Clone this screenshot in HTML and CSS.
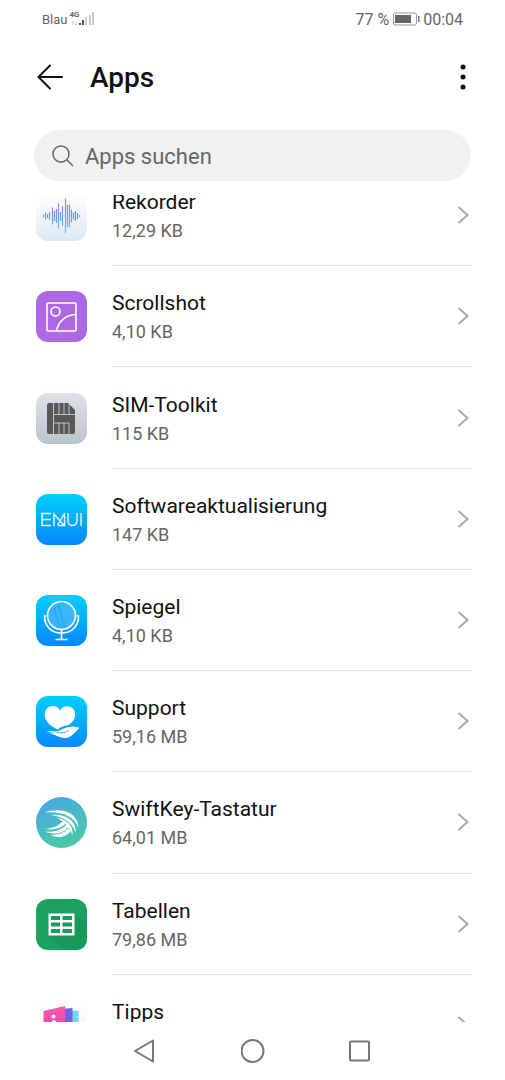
FILE: index.html
```html
<!DOCTYPE html>
<html lang="de">
<head>
<meta charset="utf-8">
<meta name="viewport" content="width=device-width, initial-scale=1">
<title>Apps</title>
<link rel="stylesheet" href="styles.css">
</head>
<body>
<div class="status">
  <div class="status-side">
    <span class="carrier">Blau</span>
    <span class="signal">
      <span class="network">4G</span>
      <svg class="bars" width="24" height="16" viewBox="0 0 24 16" aria-hidden="true">
        <path d="M2 14v-3.500M1 11.500l1-1 1 1M5 10.500V14M4 13l1 1 1-1" fill="none" stroke="#ccc"/>
        <path d="M8 12h2v2H8zM11 9h2v5h-2z" fill="#555"/>
        <path d="M14 6h2v8h-2zM18 4h2v10h-2zM21 1h2v13h-2z" fill="#ccc"/>
      </svg>
    </span>
  </div>
  <div class="status-side clock">
    <span>77 %</span>
    <svg width="28" height="14" viewBox="0 0 28 14" aria-hidden="true">
      <rect x="1.500" y="1" width="23" height="12" rx="2" fill="#fff" stroke="#999"/>
      <rect x="3" y="3" width="16" height="8" fill="#666"/>
      <path d="M26 4h1.500v6H26z" fill="#777"/>
    </svg>
    <span>00:04</span>
  </div>
</div>
<header class="header">
  <button class="icon-button" aria-label="Zurück">
    <svg width="28" height="28" viewBox="0 0 28 28"><path d="M26 13H2.500M14 1.500L2.500 13 14 24.500" fill="none" stroke="#111" stroke-width="2" stroke-linecap="round" stroke-linejoin="round"/></svg>
  </button>
  <h1 class="title">Apps</h1>
  <button class="icon-button" aria-label="Weitere Optionen">
    <svg width="16" height="28" viewBox="0 0 16 28"><g fill="#111"><circle cx="8" cy="3" r="2.500"/><circle cx="8" cy="13" r="2.500"/><circle cx="8" cy="23" r="2.500"/></g></svg>
  </button>
</header>
<label class="search">
  <svg width="22" height="22" viewBox="0 0 22 22" aria-hidden="true"><g fill="none" stroke="#666" stroke-width="1.500" stroke-linecap="round"><circle cx="9" cy="9" r="8"/><path d="M15 15l5.500 5.500"/></g></svg>
  <input class="search-input" type="text" placeholder="Apps suchen" aria-label="Apps suchen">
</label>
<main class="scroller">
  <ul class="list">
    <li class="row">
      <svg class="app-icon" viewBox="0 0 51 51" aria-hidden="true">
        <defs>
          <linearGradient id="rec-bg" x2="0" y2="1"><stop stop-color="#fff"/><stop offset=".2" stop-color="#fbfcfd"/><stop offset="1" stop-color="#dce9f3"/></linearGradient>
          <linearGradient id="rec-wave" gradientUnits="userSpaceOnUse" x1="0" y1="8" x2="0" y2="44"><stop stop-color="#b779d9"/><stop offset=".5" stop-color="#6a9be6"/><stop offset="1" stop-color="#7cc4f3"/></linearGradient>
        </defs>
        <rect width="51" height="51" rx="12" fill="url(#rec-bg)"/>
        <path d="M7.500 25v2M9.500 22.500v7M11.500 24v4M13.500 22v8M16.500 17.500v17M18.500 21v10M20.500 19v14M22.500 13.500v25M24.500 22v9M26.500 16v20M29.500 8.500v35M31.500 15v22M33.500 14.500v23M35.500 19.500v13M37.500 22.500v7M39.500 21v10M41.500 23v6M43.500 25v2" fill="none" stroke="url(#rec-wave)" stroke-width="1.200"/>
      </svg>
      <a class="row-body" href="#rekorder"><span class="row-text"><span class="name">Rekorder</span><span class="size">12,29 KB</span></span><svg class="chevron" viewBox="0 0 12 20" aria-hidden="true"><path d="M1.500 2l9 8-9 8"/></svg></a>
    </li>
    <li class="row">
      <svg class="app-icon" viewBox="0 0 51 51" aria-hidden="true">
        <rect width="51" height="51" rx="12" fill="#ad68e3"/>
        <g fill="none" stroke="#fff" stroke-width="1.600"><rect x="11" y="12" width="29" height="28" rx="1"/><circle cx="19.500" cy="20.500" r="4.500"/><path d="M20.500 40C22 31 29 24 40 23.500"/></g>
      </svg>
      <a class="row-body" href="#scrollshot"><span class="row-text"><span class="name">Scrollshot</span><span class="size">4,10 KB</span></span><svg class="chevron" viewBox="0 0 12 20" aria-hidden="true"><path d="M1.500 2l9 8-9 8"/></svg></a>
    </li>
    <li class="row">
      <svg class="app-icon" viewBox="0 0 51 51" aria-hidden="true">
        <defs><linearGradient id="sim-bg" x2="0" y2="1"><stop stop-color="#dce2e8"/><stop offset="1" stop-color="#bcc4cb"/></linearGradient></defs>
        <rect width="51" height="51" rx="12" fill="url(#sim-bg)"/>
        <path d="M13 10h19l7 7v22q0 2-2 2H13q-2 0-2-2V12q0-2 2-2z" fill="#585858"/>
        <path d="M17.500 10v31M17.500 21.500H39M23 10v11.500M28 10v11.500M33 11v10.500M17.500 30h15.500V41M23 30V41M28 30V41" fill="none" stroke="#c9d0d6" stroke-width=".9"/>
      </svg>
      <a class="row-body" href="#sim"><span class="row-text"><span class="name">SIM-Toolkit</span><span class="size">115 KB</span></span><svg class="chevron" viewBox="0 0 12 20" aria-hidden="true"><path d="M1.500 2l9 8-9 8"/></svg></a>
    </li>
    <li class="row">
      <svg class="app-icon" viewBox="0 0 51 51" aria-hidden="true">
        <defs><linearGradient id="blue" x2="0" y2="1"><stop stop-color="#02d0fc"/><stop offset="1" stop-color="#0787fb"/></linearGradient></defs>
        <rect width="51" height="51" rx="12" fill="url(#blue)"/>
        <path d="M15 19.500H6v12h9M6 25.500h9M18 32V20l10 11.500h-6M28.500 19.500L21.500 31M28.500 19v13M32 19v8a4.500 4.500 0 0 0 9 0V19M45 19v13" fill="none" stroke="#e9fbff" stroke-width="1.400"/>
      </svg>
      <a class="row-body" href="#update"><span class="row-text"><span class="name">Softwareaktualisierung</span><span class="size">147 KB</span></span><svg class="chevron" viewBox="0 0 12 20" aria-hidden="true"><path d="M1.500 2l9 8-9 8"/></svg></a>
    </li>
    <li class="row">
      <svg class="app-icon" viewBox="0 0 51 51" aria-hidden="true">
        <rect width="51" height="51" rx="12" fill="url(#blue)"/>
        <circle cx="25.500" cy="20.500" r="14" fill="#3ab6f9" stroke="#fff" stroke-width="1.600"/>
        <path d="M22 10l7 22M18 13l6 19" stroke="#2aaaf5" stroke-width="2"/>
        <path d="M10.500 21H8.500C8.500 31 15 38 25.500 38S42.500 31 42.500 21H40.500M25.500 38v6.500M19.500 44.500h12M25.500 34.500v3" fill="none" stroke="#fff" stroke-width="1.600"/>
      </svg>
      <a class="row-body" href="#spiegel"><span class="row-text"><span class="name">Spiegel</span><span class="size">4,10 KB</span></span><svg class="chevron" viewBox="0 0 12 20" aria-hidden="true"><path d="M1.500 2l9 8-9 8"/></svg></a>
    </li>
    <li class="row">
      <svg class="app-icon" viewBox="0 0 51 51" aria-hidden="true">
        <rect width="51" height="51" rx="12" fill="url(#blue)"/>
        <path d="M24 14.500C21.500 8 8.700 8 8.700 19c0 6.500 6 11 13 14.500 2-2.500 6-3.500 11-4.500 4-3 6.500-6.500 6.500-10.500 0-9.500-12-11-15.200-4z" fill="#fff"/>
        <path d="M10.500 35.500c5-1.500 9 .5 12-.5 4-2 9-4.500 13-4.500 3 0 6 .5 8 1.500-3 2-7 9.500-14 10-7 .3-9-4-17-4.500l6-.5z" fill="#fff"/>
        <path d="M20.500 36.500c5 .8 10 .5 12-2.500" fill="none" stroke="#159df9" stroke-width=".9"/>
      </svg>
      <a class="row-body" href="#support"><span class="row-text"><span class="name">Support</span><span class="size">59,16 MB</span></span><svg class="chevron" viewBox="0 0 12 20" aria-hidden="true"><path d="M1.500 2l9 8-9 8"/></svg></a>
    </li>
    <li class="row">
      <svg class="app-icon" viewBox="0 0 51 51" aria-hidden="true">
        <defs><linearGradient id="swift" x1=".3" x2=".7" y2="1"><stop stop-color="#48a9e5"/><stop offset="1" stop-color="#4bcb9f"/></linearGradient></defs>
        <circle cx="25.500" cy="25.500" r="25.500" fill="url(#swift)"/>
        <g fill="#fff">
          <path d="M8.500 15.500c14-5 33-2.500 34 15.500C38 18 24 14 8.500 15.500z"/>
          <path d="M14.500 18c14-2 26 5 25.500 18C36 25 27 19.500 14.500 18z"/>
          <path d="M21 21c10 1.500 17 8 15.500 17C33 30 29 25 21 21z"/>
          <path d="M8.500 32c8-.5 14-3 19-8.500 2 .5 3 2 2.500 3-5 5-12 7-21.500 5.500z"/>
          <path d="M8.500 34.500c9 1 16-1 22.500-7 2 1 2 2 1.500 3-6 6-14 8-24 4z"/>
          <path d="M14.500 38c8 0 13-2 18-6.500 2 1 2 3 1 4-5 5-12 6-19 2.500z"/>
        </g>
      </svg>
      <a class="row-body" href="#swiftkey"><span class="row-text"><span class="name">SwiftKey-Tastatur</span><span class="size">64,01 MB</span></span><svg class="chevron" viewBox="0 0 12 20" aria-hidden="true"><path d="M1.500 2l9 8-9 8"/></svg></a>
    </li>
    <li class="row">
      <svg class="app-icon" viewBox="0 0 51 51" aria-hidden="true">
        <rect width="51" height="51" rx="12" fill="#1ba261"/>
        <path d="M39 15l12 9v15q0 12-12 12H28L13 37z" fill="#18995c"/>
        <path d="M12.500 14.500h26v22h-26z" fill="#fff"/>
        <path d="M15 17h9v4h-9zM26.500 17H36v4h-9.500zM15 23.500h9v4h-9zM26.500 23.500H36v4h-9.500zM15 30h9v4h-9zM26.500 30H36v4h-9.500z" fill="#1b9c5c"/>
      </svg>
      <a class="row-body" href="#tabellen"><span class="row-text"><span class="name">Tabellen</span><span class="size">79,86 MB</span></span><svg class="chevron" viewBox="0 0 12 20" aria-hidden="true"><path d="M1.500 2l9 8-9 8"/></svg></a>
    </li>
    <li class="row">
      <svg class="app-icon" viewBox="0 0 51 51" aria-hidden="true">
        <defs>
          <linearGradient id="tip-bg" x2="0" y2="1"><stop stop-color="#fff"/><stop offset="1" stop-color="#e9eef4"/></linearGradient>
          <linearGradient id="tip-pink" x2="0" y2="1"><stop stop-color="#f45ba8"/><stop offset="1" stop-color="#ea3cb5"/></linearGradient>
        </defs>
        <rect width="51" height="51" rx="12" fill="url(#tip-bg)"/>
        <path d="M29 10l13.500 1v22H29z" fill="#70d5fa"/>
        <path d="M24 9l12.500-1v26H24z" fill="#7461df"/>
        <path d="M7.500 11L29 6v33L7.500 36z" fill="url(#tip-pink)"/>
        <circle cx="17.500" cy="16.500" r="2" fill="#fff"/><path d="M16 20.500h4v9h-4z" fill="#fff"/>
      </svg>
      <a class="row-body" href="#tipps"><span class="row-text"><span class="name">Tipps</span></span><svg class="chevron" viewBox="0 0 12 20" aria-hidden="true"><path d="M1.500 2l9 8-9 8"/></svg></a>
    </li>
  </ul>
</main>
<nav class="nav">
  <button class="icon-button" aria-label="Zurück"><svg width="24" height="26" viewBox="0 0 24 26"><path d="M20 2.500L2 13l18 10.500z"/></svg></button>
  <button class="icon-button" aria-label="Startbildschirm"><svg width="24" height="26" viewBox="0 0 24 26"><circle cx="11.500" cy="13" r="11"/></svg></button>
  <button class="icon-button" aria-label="Letzte Apps"><svg width="24" height="26" viewBox="0 0 24 26"><rect x="1" y="3.500" width="19" height="19" rx="1"/></svg></button>
</nav>
</body>
</html>
```
FILE: styles.css
```css
* {
  box-sizing: border-box;
}

body {
  margin: 0;
  height: 100vh;
  display: flex;
  flex-direction: column;
  background: #fff;
  color: #111;
  font-family: Roboto, "Liberation Sans", sans-serif;
}

.status {
  display: flex;
  justify-content: space-between;
  align-items: center;
  height: 38px;
  padding: 0 42px;
  color: #666;
}

.status-side {
  display: flex;
  align-items: center;
  gap: 3px;
}

.carrier {
  font-size: 13px;
}

.clock {
  font-size: 16px;
}

.signal {
  position: relative;
  display: flex;
}

.network {
  position: absolute;
  top: 0;
  left: -1px;
  font-size: 8px;
  line-height: 8px;
  font-weight: 700;
}

.header {
  display: flex;
  align-items: center;
  height: 80px;
  padding: 0 34px 0 36px;
}

.icon-button {
  display: flex;
  padding: 0;
  border: 0;
  background: none;
}

.title {
  flex: 1;
  margin: 0 0 0 26px;
  font-size: 28px;
  font-weight: 500;
  line-height: 32px;
}

.search {
  display: flex;
  align-items: center;
  gap: 11px;
  height: 51px;
  margin: 12px 34px 14px;
  padding: 1px 17px 0 18px;
  border-radius: 26px;
  background: #f1f1f1;
}

.search-input {
  flex: 1;
  min-width: 0;
  padding: 0;
  border: 0;
  outline: 0;
  background: none;
  color: #111;
  font: inherit;
  font-size: 22px;
}

.search-input::placeholder {
  color: #666;
  opacity: 1;
}

.scroller {
  flex: 1;
  min-height: 0;
  overflow: hidden;
}

/* The list is scrolled part of the way through its first row. */
.list {
  display: grid;
  grid-auto-rows: 1fr;
  height: calc(100% + 84px);
  margin: -30px 0 0;
  padding: 0;
  list-style: none;
}

.row {
  display: flex;
  align-items: center;
  gap: 25px;
  padding: 0 34px 0 36px;
}

.app-icon {
  flex: none;
  width: 51px;
  height: 51px;
}

.row-body {
  flex: 1;
  align-self: stretch;
  display: flex;
  align-items: center;
  justify-content: space-between;
  border-bottom: 1px solid #e2e2e2;
  color: inherit;
  text-decoration: none;
}

.row-text {
  display: flex;
  flex-direction: column;
  height: 56px;
}

.name {
  font-size: 21px;
  line-height: 30px;
}

.size {
  color: #666;
  font-size: 18px;
  line-height: 28px;
}

.chevron {
  width: 12px;
  height: 20px;
  margin-right: 2px;
  fill: none;
  stroke: #aaa;
  stroke-width: 2;
}

.nav {
  display: flex;
  justify-content: center;
  align-items: center;
  gap: 84px;
  height: 58px;
}

.nav svg {
  fill: none;
  stroke: #777;
  stroke-width: 2;
  stroke-linejoin: round;
}
```
